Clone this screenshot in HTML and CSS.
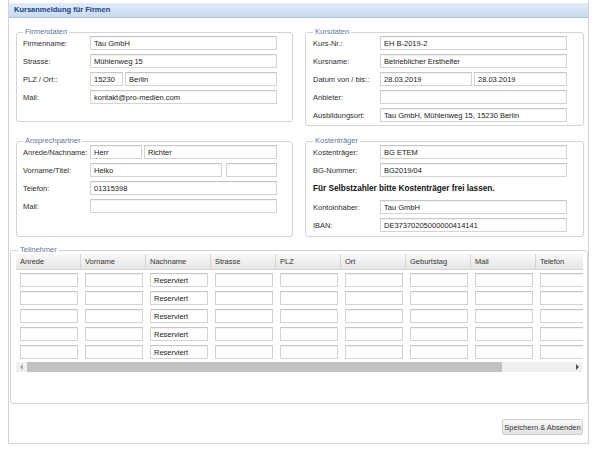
FILE: index.html
```html
<!DOCTYPE html>
<html lang="de">
<head>
<meta charset="utf-8">
<title>Kursanmeldung für Firmen</title>
<link rel="stylesheet" href="styles.css">
</head>
<body>
<div class="window">
  <div class="header">Kursanmeldung für Firmen</div>
  <div class="body">
    <div class="top-grid">
      <fieldset class="box box-left box-firma">
        <legend>Firmendaten</legend>
        <div class="rows">
          <div class="row"><label>Firmenname:</label><input class="f" value="Tau GmbH"></div>
          <div class="row"><label>Strasse:</label><input class="f" value="Mühlenweg 15"></div>
          <div class="row"><label>PLZ / Ort::</label><div class="split split-plz"><input class="f" value="15230"><input class="f" value="Berlin"></div></div>
          <div class="row"><label>Mail:</label><input class="f" value="kontakt@pro-medien.com"></div>
        </div>
      </fieldset>
      <fieldset class="box box-right box-kurs">
        <legend>Kursdaten</legend>
        <div class="rows">
          <div class="row"><label>Kurs-Nr.:</label><input class="f" value="EH B-2019-2"></div>
          <div class="row"><label>Kursname:</label><input class="f" value="Betrieblicher Ersthelfer"></div>
          <div class="row"><label>Datum von / bis::</label><div class="split split-date"><input class="f" value="28.03.2019"><input class="f" value="28.03.2019"></div></div>
          <div class="row"><label>Anbieter:</label><input class="f" value=""></div>
          <div class="row"><label>Ausbildungsort:</label><input class="f" value="Tau GmbH, Mühlenweg 15, 15230 Berlin"></div>
        </div>
      </fieldset>
      <fieldset class="box box-left box-ansp">
        <legend>Ansprechpartner</legend>
        <div class="rows">
          <div class="row"><label>Anrede/Nachname:</label><div class="split split-anrede"><input class="f" value="Herr"><input class="f" value="Richter"></div></div>
          <div class="row"><label>Vorname/Titel:</label><div class="split split-vorname"><input class="f" value="Heiko"><input class="f" value=""></div></div>
          <div class="row"><label>Telefon:</label><input class="f" value="01315398"></div>
          <div class="row"><label>Mail:</label><input class="f" value=""></div>
        </div>
      </fieldset>
      <fieldset class="box box-right box-kosten">
        <legend>Kostenträger</legend>
        <div class="rows">
          <div class="row"><label>Kostenträger:</label><input class="f" value="BG ETEM"></div>
          <div class="row"><label>BG-Nummer:</label><input class="f" value="BG2019/04"></div>
          <p class="note">Für Selbstzahler bitte Kostenträger frei lassen.</p>
          <div class="row"><label>Kontoinhaber:</label><input class="f" value="Tau GmbH"></div>
          <div class="row"><label>IBAN:</label><input class="f" value="DE37370205000000414141"></div>
        </div>
      </fieldset>
    </div>

    <fieldset class="tn">
      <legend>Teilnehmer</legend>
      <div class="grid-wrap">
        <div class="grid-head">
          <div class="hc">Anrede</div>
          <div class="hc">Vorname</div>
          <div class="hc">Nachname</div>
          <div class="hc">Strasse</div>
          <div class="hc">PLZ</div>
          <div class="hc">Ort</div>
          <div class="hc">Geburtstag</div>
          <div class="hc">Mail</div>
          <div class="hc">Telefon</div>
        </div>
        <div class="grid-row"><input class="f c"><input class="f c"><input class="f c" value="Reserviert"><input class="f c"><input class="f c"><input class="f c"><input class="f c"><input class="f c"><input class="f c"></div>
        <div class="grid-row"><input class="f c"><input class="f c"><input class="f c" value="Reserviert"><input class="f c"><input class="f c"><input class="f c"><input class="f c"><input class="f c"><input class="f c"></div>
        <div class="grid-row"><input class="f c"><input class="f c"><input class="f c" value="Reserviert"><input class="f c"><input class="f c"><input class="f c"><input class="f c"><input class="f c"><input class="f c"></div>
        <div class="grid-row"><input class="f c"><input class="f c"><input class="f c" value="Reserviert"><input class="f c"><input class="f c"><input class="f c"><input class="f c"><input class="f c"><input class="f c"></div>
        <div class="grid-row"><input class="f c"><input class="f c"><input class="f c" value="Reserviert"><input class="f c"><input class="f c"><input class="f c"><input class="f c"><input class="f c"><input class="f c"></div>
      </div>
      <div class="hscroll">
        <span class="arrow arrow-left"></span>
        <span class="thumb"></span>
        <span class="track"></span>
        <span class="arrow arrow-right"></span>
      </div>
    </fieldset>

    <div class="toolbar">
      <button class="btn" type="button">Speichern &amp; Absenden</button>
    </div>
  </div>
</div>
</body>
</html>
```
FILE: styles.css
```css
html, body {
  margin: 0;
  padding: 0;
  background: #ffffff;
}

body {
  font-family: "Liberation Sans", Arial, sans-serif;
  font-size: 7.5px;
  color: #2b2b2b;
}

.window {
  margin-left: 8px;
  width: 581px;
  height: 444px;
  box-sizing: border-box;
  border: 1px solid #cdd4dc;
  border-top: none;
  padding-top: 3px;
  display: flex;
  flex-direction: column;
}

.header {
  height: 15px;
  box-sizing: border-box;
  line-height: 14px;
  padding-left: 5px;
  background: linear-gradient(#e2ebf7, #c9daf0);
  border-bottom: 1px solid #aac2e2;
  color: #15428b;
  font-weight: bold;
}

.body {
  flex: 1;
  display: flex;
  flex-direction: column;
}

.top-grid {
  display: grid;
  grid-template-columns: 277px 279px;
  column-gap: 12px;
  row-gap: 11px;
  margin: 10px 0 0 7px;
  align-items: start;
}

fieldset {
  margin: 0;
  min-width: 0;
  border: 1px solid #d4d4d4;
  border-radius: 3px;
}

legend {
  padding: 0 2px;
  line-height: 8px;
  font-size: 7.5px;
  color: #62789a;
}

.box {
  padding: 0 0 0 6px;
}

.box-right {
  padding-left: 7px;
}

.box-firma { padding-bottom: 17px; }
.box-kurs { padding-bottom: 3px; }
.box-ansp { padding-bottom: 23px; }
.box-kosten { padding-bottom: 4px; }

.rows {
  display: flex;
  flex-direction: column;
  gap: 4px;
}

.row {
  display: grid;
  grid-template-columns: 67px 187px;
  align-items: center;
  height: 14px;
}

.row label {
  white-space: nowrap;
  color: #2e2e2e;
}

.f {
  box-sizing: border-box;
  height: 14px;
  width: 100%;
  margin: 0;
  padding: 0 3px;
  border: 1px solid #d3d3d3;
  border-top-color: #c6c6c6;
  border-radius: 0;
  background: #ffffff;
  box-shadow: inset 0 1px 1px rgba(0, 0, 0, 0.05);
  font-family: "Liberation Sans", Arial, sans-serif;
  font-size: 7.5px;
  color: #1a1a1a;
  outline: none;
}

.split {
  display: grid;
  gap: 2px;
}

.split-plz { grid-template-columns: 33px 152px; }
.split-date { grid-template-columns: 92px 93px; }
.split-anrede { grid-template-columns: 52px 133px; }
.split-vorname { grid-template-columns: 132px 51px; gap: 4px; }

.note {
  margin: 0;
  height: 15px;
  line-height: 15px;
  font-weight: bold;
  font-size: 8.2px;
  color: #111111;
  white-space: nowrap;
}

/* Teilnehmer */
.tn {
  margin: 9px 0 0 1px;
  padding: 0 3px 31px 5px;
}

.tn legend {
  margin-left: 2px;
}

.grid-wrap {
  width: 567px;
  overflow: hidden;
}

.grid-head,
.grid-row {
  display: grid;
  grid-template-columns: repeat(9, 65px);
  width: 585px;
}

.grid-head {
  height: 16px;
  box-sizing: border-box;
  background: linear-gradient(#f8f8f8, #e6e6e6);
  border-bottom: 1px solid #d6d6d6;
}

.hc {
  box-sizing: border-box;
  border-right: 1px solid #d6d6d6;
  padding-left: 4px;
  line-height: 15px;
  color: #333333;
  white-space: nowrap;
}

.grid-row {
  height: 18px;
  align-items: start;
}

.f.c {
  width: 58px;
  margin: 3px 0 0 4px;
}

.hscroll {
  display: flex;
  align-items: center;
  height: 10px;
  margin-top: 2px;
  width: 567px;
  background: #f0f0f0;
}

.arrow {
  width: 11px;
  height: 10px;
  display: flex;
  align-items: center;
  justify-content: center;
  flex: none;
}

.arrow-left::before {
  content: "";
  border-top: 3px solid transparent;
  border-bottom: 3px solid transparent;
  border-right: 3px solid #a8a8a8;
}

.arrow-right::before {
  content: "";
  border-top: 3px solid transparent;
  border-bottom: 3px solid transparent;
  border-left: 3px solid #505050;
}

.thumb {
  width: 475px;
  height: 10px;
  background: #c2c2c2;
  flex: none;
}

.track {
  flex: 1;
}

/* Toolbar */
.toolbar {
  flex: 1;
  display: flex;
  justify-content: flex-end;
  align-items: flex-start;
  padding: 15px 5px 0 0;
}

.btn {
  width: 81px;
  height: 16px;
  box-sizing: border-box;
  margin: 0;
  padding: 0;
  border: 1px solid #cfcfcf;
  border-radius: 2px;
  background: linear-gradient(#f9f9f9, #e2e2e2);
  font-family: "Liberation Sans", Arial, sans-serif;
  font-size: 7.5px;
  color: #333333;
  white-space: nowrap;
}
```
